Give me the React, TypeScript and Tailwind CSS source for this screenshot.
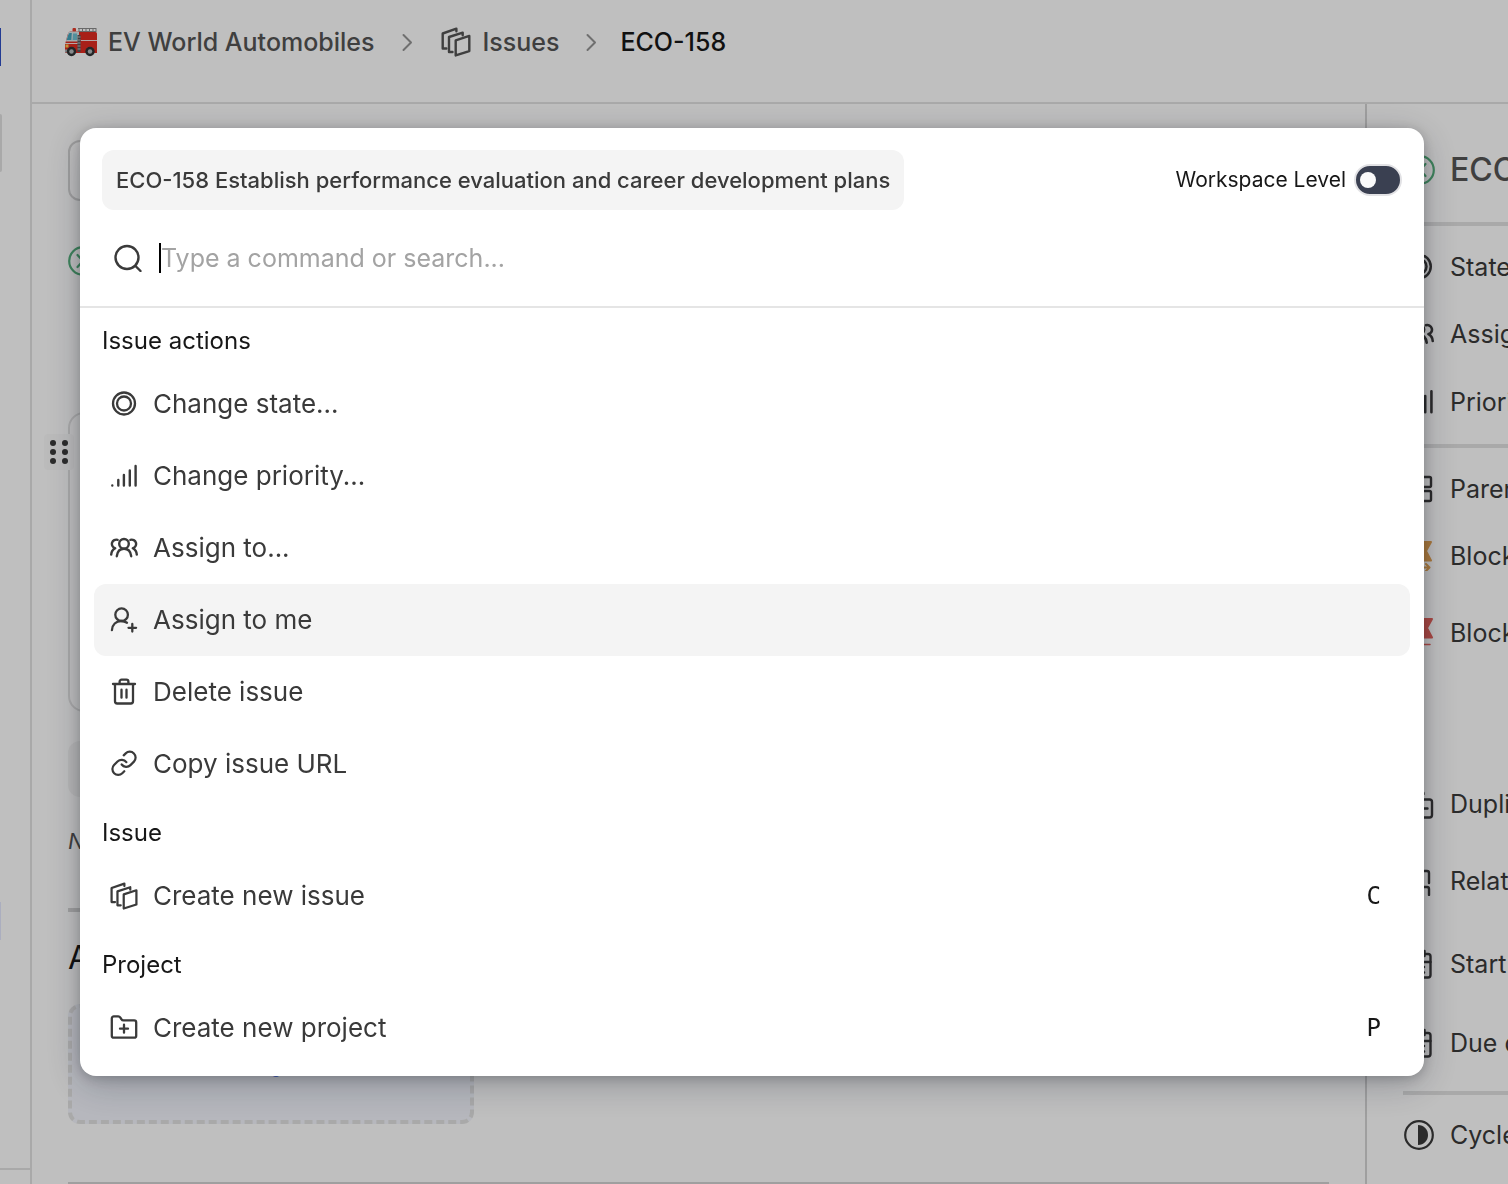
import type { ReactNode } from "react";

type IconProps = { children: ReactNode; className?: string; viewBox?: string; strokeWidth?: number };

function Icon({ children, className = "size-7", viewBox = "0 0 28 28", strokeWidth = 2.3 }: IconProps) {
  return (
    <svg
      aria-hidden="true"
      className={`shrink-0 ${className}`}
      viewBox={viewBox}
      fill="none"
      stroke="currentColor"
      strokeWidth={strokeWidth}
      strokeLinecap="round"
      strokeLinejoin="round"
    >
      {children}
    </svg>
  );
}

const big = "size-[30px]";
const bigBox = "0 0 30 30";

type SizedIconProps = { className?: string };

function StateIcon({ className }: SizedIconProps) {
  return (
    <Icon className={className}>
      <circle cx="14" cy="13.500" r="11" />
      <circle cx="14" cy="13.500" r="7" />
    </Icon>
  );
}

function PriorityIcon({ className }: SizedIconProps) {
  return (
    <Icon className={className} strokeWidth={2.4}>
      <path d="M2.3 23.500v.1M8.3 18v5.600M13.9 13v10.600M19.8 8.500v15.100M25.6 4v19.600" />
    </Icon>
  );
}

function UsersIcon({ className }: SizedIconProps) {
  return (
    <Icon className={className} strokeWidth={2.4}>
      <circle cx="14" cy="9.8" r="4.8" />
      <path d="M6.8 22.2c.6-4.600 3.300-7.400 7.200-7.400s6.600 2.800 7.200 7.400" />
      <path d="M7.600 5.800a4.200 4.200 0 0 0-2.600 8.400M1.200 20.600c.1-2.800 1.400-5 4-6.400" />
      <path d="M20.400 5.800a4.200 4.200 0 0 1 2.600 8.400M26.800 20.600c-.1-2.800-1.400-5-4-6.400" />
    </Icon>
  );
}

function UserPlusIcon() {
  return (
    <Icon>
      <circle cx="11.600" cy="8.700" r="6.300" />
      <path d="M1.900 24.200c.2-5.600 4.200-9.200 9.300-9.200 2 0 4.100.6 5.800 1.700M22.300 18v7.600M18.500 21.800h7.600" />
    </Icon>
  );
}

function TrashIcon() {
  return (
    <Icon>
      <path d="M3 6h22M9.600 6V3.700a2 2 0 0 1 2-2h4.800a2 2 0 0 1 2 2V6M5 6v17.300a2.200 2.200 0 0 0 2.200 2.200h13.600a2.200 2.200 0 0 0 2.200-2.200V6M11.500 11.700v8M16.500 11.700v8" />
    </Icon>
  );
}

function LinkIcon() {
  return (
    <Icon viewBox="0 0.600 24 24" strokeWidth={1.9}>
      <path d="M10 13a5 5 0 0 0 7.540.540l3-3a5 5 0 0 0-7.070-7.070l-1.720 1.710" />
      <path d="M14 11a5 5 0 0 0-7.540-.540l-3 3a5 5 0 0 0 7.070 7.070l1.710-1.710" />
    </Icon>
  );
}

function LayersIcon({ className = "size-7" }: SizedIconProps) {
  return (
    <Icon className={className} viewBox={bigBox} strokeWidth={2.4}>
      <path d="M14.700 13.300 28.300 8.900v15.200L14.700 28.400z" />
      <path d="M21.700 8.300V5.600L8 10v15h3.500" />
      <path d="M15.400 4.300V1.700L1.700 6.500v15h3.700" />
    </Icon>
  );
}

function FolderPlusIcon() {
  return (
    <Icon>
      <path d="M3.800 23.700h20.400a2 2 0 0 0 2-2V8.400a2 2 0 0 0-2-2H13.500c-1 0-1.700-.5-2.200-1.300l-.9-1.400c-.5-.8-1.300-1.300-2.200-1.300H3.800a2 2 0 0 0-2 2v17.300a2 2 0 0 0 2 2zM14 10.700v8M10 14.700h8" />
    </Icon>
  );
}

function CancelledIcon() {
  return (
    <Icon className={`text-[#54b07c] ${big}`} viewBox={bigBox} strokeWidth={2.2}>
      <circle cx="15" cy="15" r="13.800" />
      <path d="m9.500 9 11 12M20.500 9l-11 12" />
    </Icon>
  );
}

function ParentIcon() {
  return (
    <Icon className={big} viewBox={bigBox} strokeWidth={2.4}>
      <rect x="3" y="3" width="9" height="24" rx="2" />
      <rect x="16" y="3" width="11" height="10" rx="1.500" />
      <rect x="16" y="17" width="11" height="10" rx="1.500" />
    </Icon>
  );
}

function BlockingIcon() {
  return (
    <Icon className={`text-[#e4a352] ${big}`} viewBox={bigBox} strokeWidth={2}>
      <path d="M2 1h25l-5 9 5 9.500H2z" fill="currentColor" />
      <path d="M10 26.500h15M22 23l3.500 3.500L22 30" />
    </Icon>
  );
}

function BlockedIcon() {
  return (
    <Icon className={`text-[#e4615a] ${big}`} viewBox={bigBox} strokeWidth={2}>
      <path d="M2 1h26l-5 9 5 9.500H2z" fill="currentColor" />
      <path d="M6 26.500h20" strokeWidth="1.500" />
    </Icon>
  );
}

function DuplicateIcon() {
  return (
    <Icon className={big} viewBox={bigBox} strokeWidth={2.400}>
      <rect x="9" y="10.500" width="19" height="18" rx="2.500" />
      <path d="M18.500 15.500v8M14.500 19.500h9M2 21V5a2.500 2.500 0 0 1 2.500-2.500H17A2.500 2.500 0 0 1 19.500 5" />
    </Icon>
  );
}

function RelationIcon() {
  return (
    <Icon className={big} viewBox={bigBox} strokeWidth={2.400}>
      <path d="M12 17V7a2 2 0 0 1 2-2h9a2 2 0 0 1 2 2v10M12 21h11a2 2 0 0 1 2 2v6" />
    </Icon>
  );
}

function CalendarIcon() {
  return (
    <Icon className={big} viewBox={bigBox} strokeWidth={2.400}>
      <rect x="2" y="5" width="24.500" height="23.500" rx="2.500" />
      <path d="M2 13h24.500M8 2v5M20.500 2v5M8 18h.1M14 18h.1M20 18h.1M8 23.500h.1M14 23.500h.1M20 23.500h.1" />
    </Icon>
  );
}

function CycleIcon() {
  return (
    <Icon className={big} viewBox={bigBox} strokeWidth={2.200}>
      <circle cx="15" cy="15" r="13.800" />
      <path d="M14 5v20c6 0 10-4.500 10-10S20 5 14 5z" fill="currentColor" stroke="none" />
    </Icon>
  );
}

function ChevronIcon() {
  return (
    <Icon className="size-6 text-[#959595]" viewBox="0 0 24 24" strokeWidth={2}>
      <path d="m8.500 5 7.500 7.500L8.500 20" />
    </Icon>
  );
}

function FireTruck() {
  return (
    <svg aria-hidden="true" className="h-[30px] w-[34px] shrink-0" viewBox="0 0 34 30">
      <path d="M14 1.500h18M14 4.500h18M15 1v4M18.500 1v4M22 1v4M25.500 1v4M29 1v4M32 1v4" stroke="#8b8b8b" strokeWidth="1" fill="none" />
      <rect x="8.500" y="1" width="3.500" height="4" rx="1" fill="#e63b2a" />
      <path d="M14 5h17.500a1.500 1.500 0 0 1 1.500 1.500V26H14z" fill="#e02b20" />
      <path d="M6 4.500h9V26H2a1 1 0 0 1-1-1v-7.500L3.500 8A4.500 4.500 0 0 1 6 4.500z" fill="#e02b20" />
      <path d="M5.500 4.500h9.500v10H1.800L3.800 7.500c.4-1.400.9-2.300 1.700-3z" fill="#d8e3e6" />
      <path d="M5.500 6h2.300l-.5 7H2.700l1.500-5z" fill="#43a3bb" />
      <path d="M9 6.500h4V13H8.600z" fill="#6fc0d2" />
      <path d="M1 16.500h13M17 13.500h16" stroke="#f2dede" strokeWidth="1.200" />
      <path d="M13.500 8h3v17h-3z" fill="#55595c" />
      <path d="M13.500 10h3M13.500 13h3M13.500 16h3M13.500 19h3M13.500 22h3" stroke="#b9bec0" strokeWidth="1" />
      <path d="M1.500 17.500h3v3h-3z" fill="#ffc94b" />
      <path d="M1 22.500h4v3H1z" fill="#a7adb0" />
      <circle cx="7.500" cy="24.500" r="4.700" fill="#2f3335" />
      <circle cx="7.500" cy="24.500" r="2.200" fill="#b5babc" />
      <circle cx="26" cy="24.500" r="4.700" fill="#2f3335" />
      <circle cx="26" cy="24.500" r="2.200" fill="#b5babc" />
    </svg>
  );
}

function Breadcrumbs() {
  return (
    <header className="h-[104px] shrink-0 border-b-2 border-[#e2e2e2] pt-6 pl-8">
      <nav aria-label="Breadcrumb" className="flex h-9 items-center text-[25px] leading-9 font-medium whitespace-nowrap text-[#555]">
        <a href="#project" className="flex items-center gap-2.5">
          <FireTruck />
          EV World Automobiles
        </a>
        <span className="pr-[22px] pl-5">
          <ChevronIcon />
        </span>
        <a href="#issues" className="flex items-center gap-3">
          <LayersIcon className="size-[30px]" />
          Issues
        </a>
        <span className="pr-[17px] pl-5">
          <ChevronIcon />
        </span>
        <span className="text-[#171717]">ECO-158</span>
      </nav>
    </header>
  );
}

function IssueBody() {
  return (
    <main className="flex min-w-0 flex-1 flex-col pt-9 pr-9 pl-9">
      <div className="h-[61px] shrink-0 rounded-xl border-2 border-[#d4d4d4]" />
      <div className="mt-[45px] h-[30px]">
        <CancelledIcon />
      </div>
      <div className="relative mt-[136px] h-[300px] shrink-0 rounded-2xl border-2 border-[#e2e2e2]">
        <button
          type="button"
          aria-label="Drag description"
          className="absolute top-5 -left-[26px] grid h-9 w-[30px] grid-cols-2 place-items-center rounded bg-[#fafafa] px-[3px] py-1 text-[#3a3a3a]"
        >
          {[0, 1, 2, 3, 4, 5].map((dot) => (
            <span key={dot} className="size-1.5 rounded-full bg-current" />
          ))}
        </button>
      </div>
      <div className="mt-[29px] h-14 shrink-0 rounded-xl bg-[#f4f4f4]" />
      <p className="mt-[26px] text-[22px] leading-9 text-[#555] italic">No sub-issues yet</p>
      <hr className="mt-[49px] border-t-4 border-[#d4d4d4]" />
      <h2 className="mt-7 text-[32px] leading-9 text-[#171717]">Attachments</h2>
      <div className="mt-7 flex h-[120px] w-[406px] shrink-0 items-center justify-center rounded-xl border-4 border-dashed border-[#e2e2e2] bg-[#f3f5fc] text-[22px] leading-9 text-[#3f63dd]">
        Click or drag a file here
      </div>
      <hr className="mt-[58px] border-t-4 border-[#d4d4d4]" />
    </main>
  );
}

function Property({ icon, label, className }: { icon: ReactNode; label: string; className: string }) {
  return (
    <div className={`flex h-9 shrink-0 items-center gap-4 pl-px whitespace-nowrap ${className}`}>
      {icon}
      {label}
    </div>
  );
}

function PropertyPanel() {
  return (
    <aside className="w-[143px] shrink-0 overflow-hidden border-l-2 border-[#d4d4d4] pl-9 text-[25px] leading-9 text-[#3a3a3a]">
      <div className="mt-12 flex h-9 items-center gap-[15px] pl-0.5 whitespace-nowrap text-[32px] font-medium text-[#555]">
        <CancelledIcon />
        ECO-158
      </div>
      <hr className="mt-[34px] border-t-4 border-[#e2e2e2]" />
      <Property className="mt-[23px]" icon={<StateIcon className={big} />} label="State" />
      <Property className="mt-[31px]" icon={<UsersIcon className={big} />} label="Assignees" />
      <Property className="mt-8" icon={<PriorityIcon className={big} />} label="Priority" />
      <hr className="mt-6 border-t-4 border-[#e2e2e2]" />
      <Property className="mt-[23px]" icon={<ParentIcon />} label="Parent" />
      <Property className="mt-[31px]" icon={<BlockingIcon />} label="Blocking" />
      <Property className="mt-[41px]" icon={<BlockedIcon />} label="Blocked by" />
      <Property className="mt-[135px]" icon={<DuplicateIcon />} label="Duplicate of" />
      <Property className="mt-[41px]" icon={<RelationIcon />} label="Relates to" />
      <Property className="mt-[47px]" icon={<CalendarIcon />} label="Start date" />
      <Property className="mt-[43px]" icon={<CalendarIcon />} label="Due date" />
      <hr className="mt-[30px] border-t-4 border-[#e2e2e2]" />
      <Property className="mt-[22px]" icon={<CycleIcon />} label="Cycle" />
    </aside>
  );
}

type Command = { label: string; icon: ReactNode; shortcut?: string; active?: boolean };

const groups: { title: string; commands: Command[] }[] = [
  {
    title: "Issue actions",
    commands: [
      { label: "Change state...", icon: <StateIcon /> },
      { label: "Change priority...", icon: <PriorityIcon /> },
      { label: "Assign to...", icon: <UsersIcon /> },
      { label: "Assign to me", icon: <UserPlusIcon />, active: true },
      { label: "Delete issue", icon: <TrashIcon /> },
      { label: "Copy issue URL", icon: <LinkIcon /> },
    ],
  },
  { title: "Issue", commands: [{ label: "Create new issue", icon: <LayersIcon />, shortcut: "C" }] },
  { title: "Project", commands: [{ label: "Create new project", icon: <FolderPlusIcon />, shortcut: "P" }] },
];

function CommandPalette() {
  return (
    <div
      role="dialog"
      aria-label="Command palette"
      className="w-full rounded-2xl bg-white pt-[22px] pb-3 shadow-[0_2px_12px_rgba(0,0,0,0.2),0_8px_36px_rgba(10,20,40,0.25)]"
    >
      <div className="flex items-center justify-between px-[22px]">
        <p className="rounded-xl bg-[#f4f4f4] px-3.5 py-3 text-[22px] leading-9 font-medium whitespace-nowrap text-[#3a3a3a]">
          ECO-158 Establish performance evaluation and career development plans
        </p>
        <div className="flex items-center gap-2 text-[21px] leading-9 whitespace-nowrap text-[#171717]">
          <span id="workspace-level">Workspace Level</span>
          <button
            type="button"
            role="switch"
            aria-checked="false"
            aria-labelledby="workspace-level"
            className="flex h-8 w-12 items-center rounded-full border-2 border-[#e2e2e5] bg-[#3a4051] px-1"
          >
            <span className="size-4 rounded-full bg-[#fafafa]" />
          </button>
        </div>
      </div>
      <div className="flex h-[98px] items-center border-b-2 border-[#e5e5e5] pr-8 pl-[34px] text-[#3a3a3a]">
        <Icon strokeWidth={2.4}>
          <circle cx="13" cy="13.500" r="11.500" />
          <path d="m21.500 22 5 5" />
        </Icon>
        <span className="ml-[17px] h-[30px] w-0.5 bg-black" />
        <input
          type="text"
          aria-label="Type a command or search"
          placeholder="Type a command or search..."
          className="min-w-0 flex-1 bg-transparent text-[25px] leading-9 text-[#171717] outline-none placeholder:text-[#a3a3a3]"
        />
      </div>
      {groups.map((group) => (
        <section key={group.title}>
          <h3 className="px-[22px] pt-[15px] pb-[9px] text-2xl leading-9 text-[#171717]">{group.title}</h3>
          <div className="px-3.5">
            {group.commands.map((command) => (
              <button
                key={command.label}
                type="button"
                className={`flex h-[72px] w-full items-center gap-[15px] rounded-xl pr-[29px] pl-4 text-left text-[26px] leading-9 text-[#3a3a3a] ${
                  command.active ? "bg-[#f4f4f4]" : ""
                }`}
              >
                {command.icon}
                <span className="flex-1">{command.label}</span>
                {command.shortcut && (
                  <kbd className="font-['DejaVu_Sans_Mono',monospace] text-2xl text-[#171717]">{command.shortcut}</kbd>
                )}
              </button>
            ))}
          </div>
        </section>
      ))}
    </div>
  );
}

export default function App() {
  return (
    <div className="h-screen overflow-hidden bg-white font-['Inter',sans-serif]">
      <div className="flex h-full">
        <div className="flex w-8 shrink-0 flex-col border-r-2 border-[#e2e2e2]">
          <div className="mt-7 h-[38px] w-px shrink-0 bg-[#2f4fc4]" />
          <div className="mt-12 h-[58px] w-0.5 shrink-0 rounded-r bg-[#e2e2e2]" />
          <div className="mt-[730px] h-[38px] w-px shrink-0 bg-[#e4e9ff]" />
          <div className="mt-[228px] border-t-2 border-[#e2e2e2]" />
        </div>
        <div className="flex min-w-0 flex-1 flex-col">
          <Breadcrumbs />
          <div className="flex min-h-0 flex-1">
            <IssueBody />
            <PropertyPanel />
          </div>
        </div>
      </div>
      <div className="fixed inset-0 flex items-start bg-black/25 pt-32 pr-21 pl-20">
        <CommandPalette />
      </div>
    </div>
  );
}
